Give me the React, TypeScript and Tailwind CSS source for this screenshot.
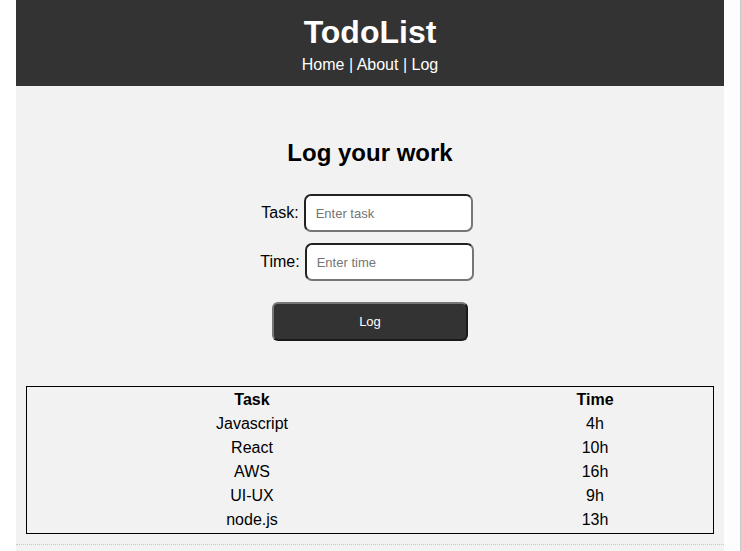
import { useState } from "react";

const logs = [
  { task: "Javascript", time: "4h" },
  { task: "React", time: "10h" },
  { task: "AWS", time: "16h" },
  { task: "UI-UX", time: "9h" },
  { task: "node.js", time: "13h" },
];

export default function App() {
  const [task, setTask] = useState("");
  const [time, setTime] = useState("");

  return (
    <div
      className="flex min-h-screen bg-white text-black"
      style={{ fontFamily: '"Liberation Sans", Arial, sans-serif' }}
    >
      <div className="w-4 shrink-0" />
      <div className="w-[708px] shrink-0 flex flex-col bg-[#f2f2f2]">
        {/* Header */}
        <header className="h-[86px] bg-[#333333] text-white flex flex-col items-center pt-[14px]">
          <h1 className="text-[32px] font-bold leading-[37px]">TodoList</h1>
          <nav className="mt-[5px] text-base leading-[18px]">
            <a href="#">Home</a> | <a href="#">About</a> | <a href="#">Log</a>
          </nav>
        </header>

        {/* Log form */}
        <main className="flex flex-col items-center pt-[53px]">
          <h2 className="text-2xl font-bold leading-[28px]">Log your work</h2>
          <div className="mt-[27px] flex flex-col gap-[11px] pr-[6px]">
            <div className="flex items-center justify-center gap-[5px]">
              <label className="text-base">Task:</label>
              <input
                value={task}
                onChange={(e) => setTask(e.target.value)}
                placeholder="Enter task"
                className="w-[169px] h-[38px] rounded-[7px] bg-white border-2 border-t-[#222] border-l-[#222] border-r-[#767676] border-b-[#767676] pl-[10px] text-[13px] placeholder:text-[#757575] outline-none"
              />
            </div>
            <div className="flex items-center justify-center gap-[5px]">
              <label className="text-base">Time:</label>
              <input
                value={time}
                onChange={(e) => setTime(e.target.value)}
                placeholder="Enter time"
                className="w-[169px] h-[38px] rounded-[7px] bg-white border-2 border-t-[#222] border-l-[#222] border-r-[#767676] border-b-[#767676] pl-[10px] text-[13px] placeholder:text-[#757575] outline-none"
              />
            </div>
          </div>
          <button
            type="button"
            className="mt-[21px] w-[196px] h-[39px] rounded-[6px] bg-[#333333] text-white text-[13px] border-2 border-t-[#777] border-l-[#777] border-r-[#1a1a1a] border-b-[#1a1a1a]"
          >
            Log
          </button>
        </main>

        {/* Table */}
        <div className="mx-[10px] mt-[45px] border border-black pt-[1px] pb-[1px]">
          <div className="grid grid-cols-[450px_1fr] text-base leading-[24px] text-center">
            <div className="font-bold">Task</div>
            <div className="font-bold">Time</div>
            {logs.map((l) => (
              <div key={l.task} className="contents">
                <div>{l.task}</div>
                <div>{l.time}</div>
              </div>
            ))}
          </div>
        </div>
        <div className="mt-[10px] border-t border-dotted border-[#c8c8c8]" />
        <div className="flex-1" />
      </div>
      <div className="flex-1 bg-[#fdfdfd] border-r border-[#c8c8c8]" />
    </div>
  );
}
